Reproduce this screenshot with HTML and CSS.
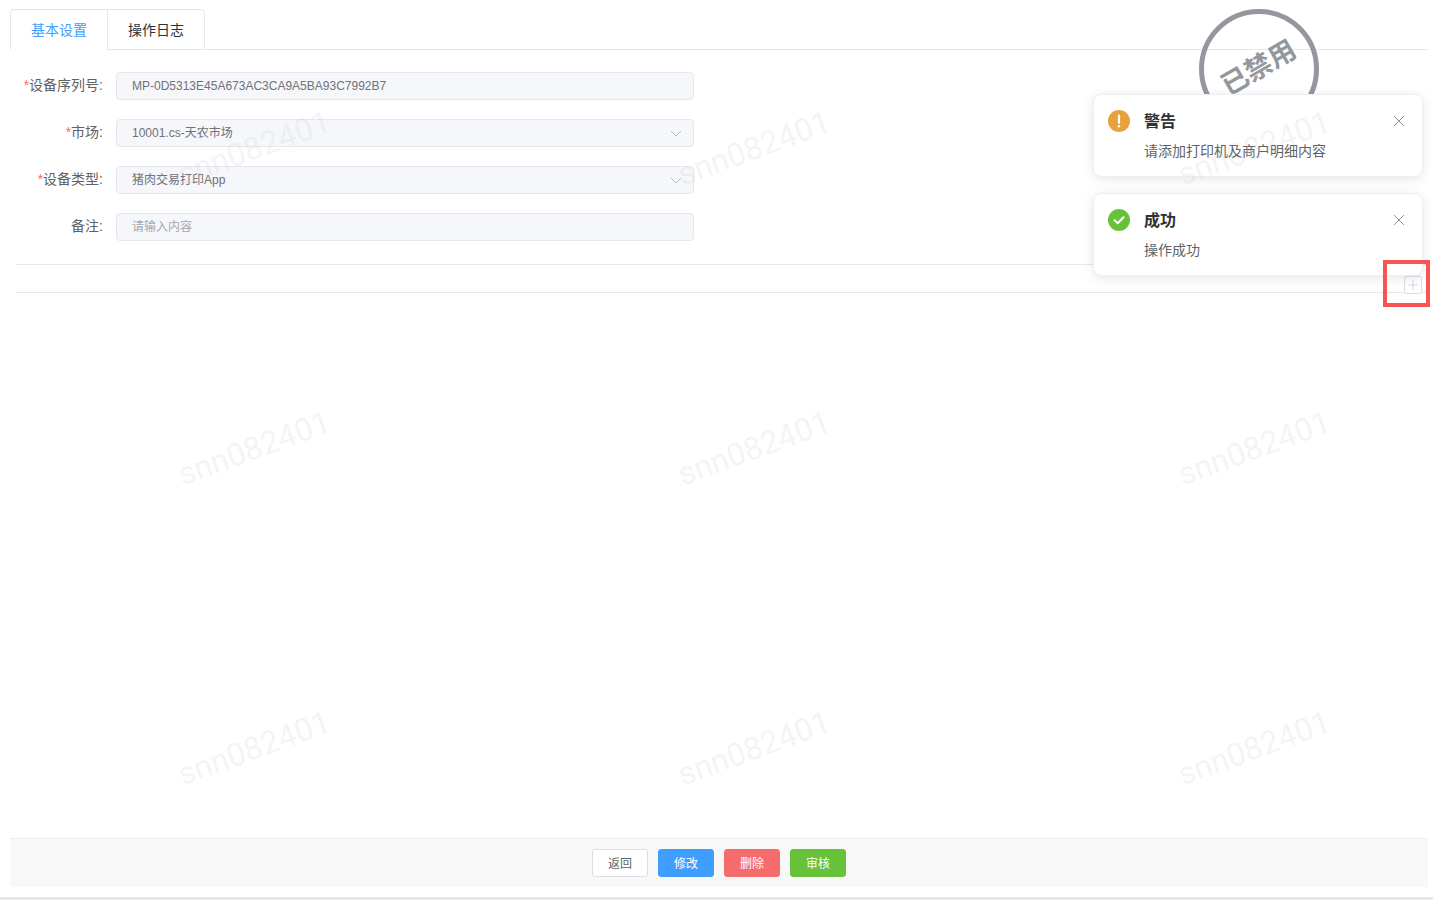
FILE: index.html
```html
<!DOCTYPE html>
<html lang="zh-CN">
<head>
  <meta charset="UTF-8" />
  <title>设备详情</title>
  <link rel="stylesheet" href="styles.css">
</head>
<body>
  <div class="page">
    <div class="tabs">
      <div class="tab tab-active">基本设置</div>
      <div class="tab">操作日志</div>
    </div>

    <div class="content">
      <form class="form">
        <div class="form-row">
          <label class="form-label"><span class="req">*</span>设备序列号:</label>
          <div class="field">MP-0D5313E45A673AC3CA9A5BA93C7992B7</div>
        </div>
        <div class="form-row">
          <label class="form-label"><span class="req">*</span>市场:</label>
          <div class="field field-select">10001.cs-天农市场
            <svg class="chevron" viewBox="0 0 12 7"><path d="M1 1l5 5 5-5" /></svg>
          </div>
        </div>
        <div class="form-row">
          <label class="form-label"><span class="req">*</span>设备类型:</label>
          <div class="field field-select">猪肉交易打印App
            <svg class="chevron" viewBox="0 0 12 7"><path d="M1 1l5 5 5-5" /></svg>
          </div>
        </div>
        <div class="form-row">
          <label class="form-label">备注:</label>
          <div class="field field-empty">请输入内容</div>
        </div>
      </form>

      <div class="section">
        <div class="add-btn">
          <svg viewBox="0 0 16 16"><path d="M8 3v10M3 8h10" /></svg>
        </div>
      </div>
    </div>

    <div class="toolbar">
      <button class="btn">返回</button>
      <button class="btn btn-blue">修改</button>
      <button class="btn btn-red">删除</button>
      <button class="btn btn-green">审核</button>
    </div>
    <div class="page-edge"></div>
  </div>

  <!-- disabled stamp -->
  <div class="stamp"><span class="stamp-text">已禁用</span></div>

  <div class="notifications">
    <div class="notice">
      <svg class="notice-icon" viewBox="0 0 22 22">
        <circle cx="11" cy="11" r="11" fill="#e6a23c" />
        <path d="M11 5.5v7.5" stroke="#fff" stroke-width="2.2" stroke-linecap="round" />
        <circle cx="11" cy="16.3" r="1.3" fill="#fff" />
      </svg>
      <div class="notice-body">
        <h2 class="notice-title">警告</h2>
        <p class="notice-text">请添加打印机及商户明细内容</p>
      </div>
      <svg class="notice-close" viewBox="0 0 12 12"><path d="M1 1l10 10M11 1L1 11" /></svg>
    </div>
    <div class="notice">
      <svg class="notice-icon" viewBox="0 0 22 22">
        <circle cx="11" cy="11" r="11" fill="#67c23a" />
        <path d="M6.5 11.3l3.2 3 5.8-6" fill="none" stroke="#fff" stroke-width="2" stroke-linecap="round" stroke-linejoin="round" />
      </svg>
      <div class="notice-body">
        <h2 class="notice-title">成功</h2>
        <p class="notice-text">操作成功</p>
      </div>
      <svg class="notice-close" viewBox="0 0 12 12"><path d="M1 1l10 10M11 1L1 11" /></svg>
    </div>
  </div>

  <!-- watermark tiles, sit over everything -->
  <div class="watermarks">
    <div class="wm-grid">
      <span class="wm">snn082401</span><span class="wm">snn082401</span><span class="wm">snn082401</span>
      <span class="wm">snn082401</span><span class="wm">snn082401</span><span class="wm">snn082401</span>
      <span class="wm">snn082401</span><span class="wm">snn082401</span><span class="wm">snn082401</span>
    </div>
  </div>

  <!-- red highlight box from the screenshot -->
  <div class="highlight"></div>
</body>
</html>
```

FILE: styles.css
```css
:root {
  --line: #e4e7ed;
  --field-bg: #f5f7fa;
  --blue: #409eff;
  --red: #f56c6c;
  --green: #67c23a;
}

* {
  box-sizing: border-box;
}

html, body {
  margin: 0;
  height: 100%;
  overflow: hidden;
}

body {
  position: relative;
  font-family: "Liberation Sans", "Noto Sans CJK SC", sans-serif;
  font-size: 14px;
  color: #606266;
  background: #fff;
}

.page {
  height: 900px;
  display: flex;
  flex-direction: column;
  padding: 9px 5px 0 10px;
}

.tabs {
  display: flex;
  height: 41px;
  flex: none;
  border-bottom: 1px solid var(--line);
}

.tab {
  width: 97px;
  height: 41px;
  line-height: 40px;
  text-align: center;
  color: #303133;
  border: 1px solid var(--line);
  border-left: none;
  border-radius: 0 4px 0 0;
  background: #fff;
}

.tab-active {
  width: 98px;
  color: var(--blue);
  border-left: 1px solid var(--line);
  border-bottom-color: #fff;
  border-radius: 4px 0 0 0;
}

.content {
  flex: 1;
  padding: 22px 0 0 6px;
}

.form {
  display: flex;
  flex-direction: column;
  gap: 19px;
}

.form-row {
  display: flex;
  align-items: center;
  height: 28px;
}

.form-label {
  width: 87px;
  text-align: right;
  margin-right: 13px;
  padding-bottom: 4px;
  white-space: nowrap;
}

.req {
  color: var(--red);
}

.field {
  position: relative;
  width: 578px;
  height: 28px;
  line-height: 26px;
  padding: 0 15px;
  font-size: 12px;
  color: #6f7278;
  background: var(--field-bg);
  border: 1px solid var(--line);
  border-radius: 4px;
}

.field-empty {
  color: #a4a7ad;
}

.chevron {
  position: absolute;
  top: 10px;
  right: 11px;
  width: 12px;
  height: 7px;
  fill: none;
  stroke: #b8bcc4;
  stroke-width: 1;
}

.section {
  position: relative;
  height: 29px;
  margin-top: 23px;
  border-top: 1px solid var(--line);
  border-bottom: 1px solid var(--line);
}

.add-btn {
  position: absolute;
  top: 11px;
  right: 6px;
  width: 18px;
  height: 18px;
  background: #fff;
  border: 1px solid #dcdfe6;
  border-radius: 2px;
}

.add-btn svg {
  display: block;
  width: 16px;
  height: 16px;
  fill: none;
  stroke: #d5d9e6;
  stroke-width: 1;
}

.toolbar {
  flex: none;
  height: 49px;
  display: flex;
  justify-content: center;
  align-items: center;
  gap: 10px;
  background: #f8f8f8;
  border-top: 1px solid #eeeeee;
}

.btn {
  width: 56px;
  height: 28px;
  padding: 0 0 2px;
  font-family: inherit;
  font-size: 12px;
  color: #606266;
  background: #fff;
  border: 1px solid #dcdfe6;
  border-radius: 3px;
}

.btn-blue {
  color: #fff;
  background: var(--blue);
  border-color: var(--blue);
}

.btn-red {
  color: #fff;
  background: var(--red);
  border-color: var(--red);
}

.btn-green {
  color: #fff;
  background: var(--green);
  border-color: var(--green);
}

.page-edge {
  flex: none;
  height: 3px;
  margin: 10px -5px 0 -10px;
  background: var(--line);
}

.stamp {
  position: absolute;
  top: 9px;
  left: 1199px;
  width: 120px;
  height: 120px;
  display: flex;
  align-items: center;
  justify-content: center;
  border: 5px solid #94979d;
  border-radius: 50%;
}

.stamp-text {
  font-size: 27px;
  font-weight: 700;
  color: #94979d;
  white-space: nowrap;
  transform: translate(-2px, -4px) rotate(-30deg);
}

.watermarks {
  position: absolute;
  top: 0;
  left: 0;
  width: 1433px;
  height: 900px;
  overflow: hidden;
  pointer-events: none;
}

.wm-grid {
  display: grid;
  grid-template-columns: repeat(3, 500px);
  grid-auto-rows: 300px;
  margin: -2px 0 0 4px;
}

.wm {
  display: flex;
  align-items: center;
  justify-content: center;
  font-family: "Roboto", "Liberation Sans", sans-serif;
  font-size: 32px;
  font-weight: 400;
  color: rgba(190, 190, 195, 0.17);
  transform: rotate(-20deg);
}

.notifications {
  position: absolute;
  top: 94px;
  right: 10px;
  width: 330px;
  display: flex;
  flex-direction: column;
  gap: 16px;
}

.notice {
  position: relative;
  display: flex;
  height: 83px;
  padding: 15px 14px 0 14px;
  background: #fff;
  border: 1px solid #ebeef5;
  border-radius: 8px;
  box-shadow: 0 2px 12px rgba(0, 0, 0, 0.1);
}

.notice-icon {
  flex: none;
  width: 22px;
  height: 22px;
}

.notice-body {
  margin-left: 14px;
}

.notice-title {
  margin: 0;
  font-size: 16px;
  line-height: 24px;
  font-weight: 700;
  color: #303133;
}

.notice-text {
  margin: 6px 0 0;
  font-size: 14px;
  line-height: 22px;
  color: #606266;
}

.notice-close {
  position: absolute;
  top: 20px;
  right: 17px;
  width: 12px;
  height: 12px;
  fill: none;
  stroke: #909399;
  stroke-width: 1;
}

.highlight {
  position: absolute;
  top: 260px;
  left: 1383px;
  width: 47px;
  height: 47px;
  border: 4px solid #f85454;
  pointer-events: none;
}
```
